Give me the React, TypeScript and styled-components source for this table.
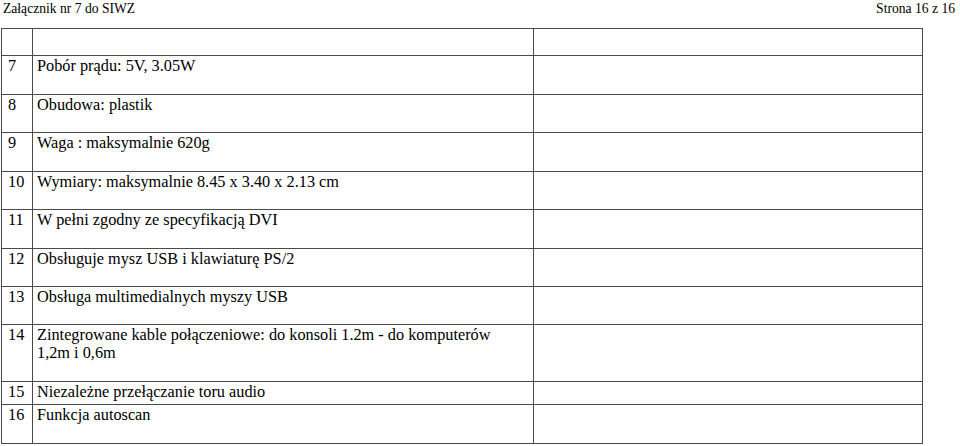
import React from 'react';
import styled, { createGlobalStyle } from 'styled-components';

const GlobalStyle = createGlobalStyle`
  html, body {
    margin: 0;
    padding: 0;
    background: #ffffff;
  }
  body {
    font-family: "Liberation Serif", "Times New Roman", serif;
    color: #000000;
  }
`;

const Page = styled.div`
  width: 960px;
  height: 446px;
  overflow: hidden;
  background: #ffffff;
`;

const PageHeader = styled.div`
  display: flex;
  justify-content: space-between;
  align-items: flex-start;
  height: 28px;
  padding: 1px 5px 0 3px;
  box-sizing: border-box;
  font-size: 13.6px;
  line-height: 15px;
`;

const SpecTable = styled.table`
  border-collapse: collapse;
  margin-left: 1px;
  width: 922px;
  table-layout: fixed;
  font-size: 16.3px;
  line-height: 18.4px;
`;

const Row = styled.tr<{ $h: number }>`
  height: ${p => p.$h}px;
`;

const Cell = styled.td`
  border: 1px solid #4a4a4a;
  padding: 1px 4px 0 4px;
  vertical-align: top;
  white-space: pre-line;
`;

const NumCell = styled(Cell)`
  width: 22px;
  padding-left: 6px;
  padding-right: 2px;
`;

const DescCell = styled(Cell)`
  width: 492px;
`;

type Item = { no: string; text: string; h: number };

const items: Item[] = [
  { no: '7', text: 'Pobór prądu: 5V, 3.05W', h: 39 },
  { no: '8', text: 'Obudowa: plastik', h: 38 },
  { no: '9', text: 'Waga : maksymalnie 620g', h: 39 },
  { no: '10', text: 'Wymiary: maksymalnie 8.45 x 3.40 x 2.13 cm', h: 38 },
  { no: '11', text: 'W pełni zgodny ze specyfikacją DVI', h: 39 },
  { no: '12', text: 'Obsługuje mysz USB i klawiaturę PS/2', h: 38 },
  { no: '13', text: 'Obsługa multimedialnych myszy USB', h: 38 },
  { no: '14', text: 'Zintegrowane kable połączeniowe: do konsoli 1.2m - do komputerów\n1,2m i 0,6m', h: 57 },
  { no: '15', text: 'Niezależne przełączanie toru audio', h: 23 },
  { no: '16', text: 'Funkcja autoscan', h: 39 },
];

export default function App() {
  return (
    <Page>
      <GlobalStyle />
      <PageHeader>
        <span>Załącznik nr 7 do SIWZ</span>
        <span>Strona 16 z 16</span>
      </PageHeader>
      <SpecTable>
        <tbody>
          <Row $h={27}>
            <NumCell />
            <DescCell />
            <Cell />
          </Row>
          {items.map(item => (
            <Row key={item.no} $h={item.h}>
              <NumCell>{item.no}</NumCell>
              <DescCell>{item.text}</DescCell>
              <Cell />
            </Row>
          ))}
        </tbody>
      </SpecTable>
    </Page>
  );
}
